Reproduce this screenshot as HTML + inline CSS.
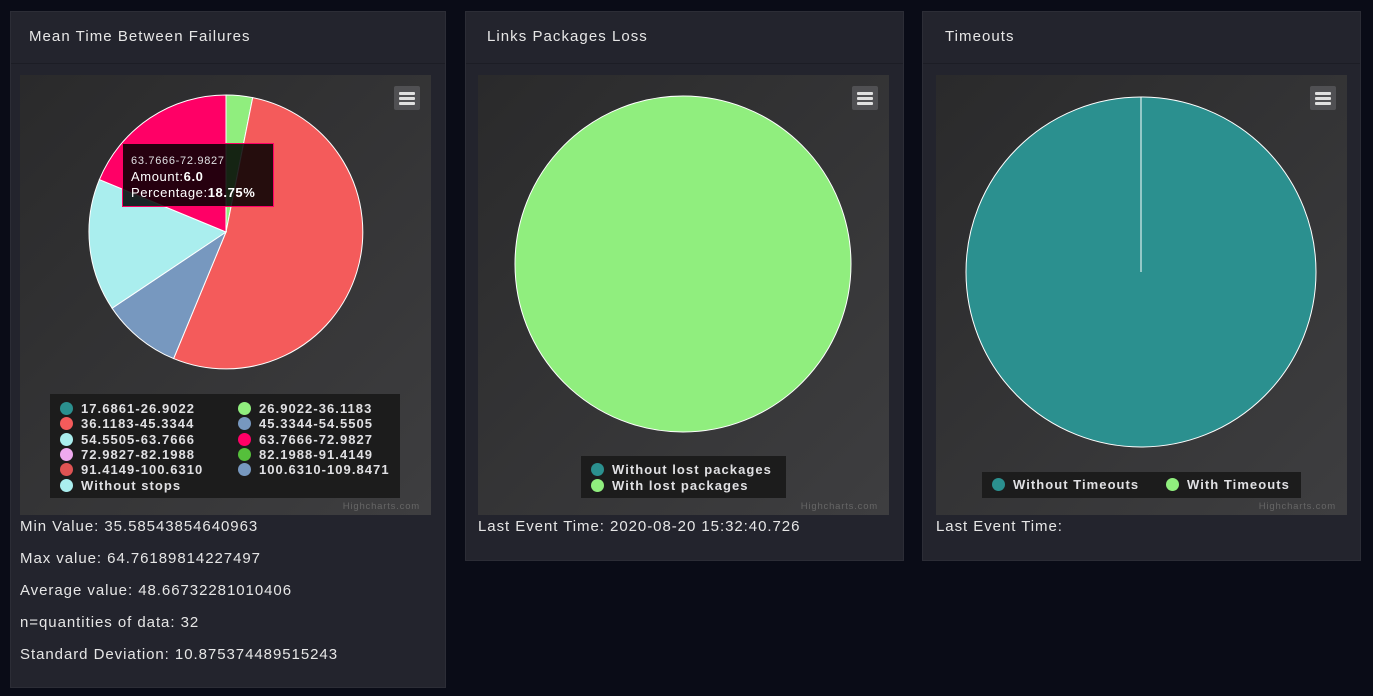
<!DOCTYPE html>
<html><head><meta charset="utf-8"><style>
*{margin:0;padding:0;box-sizing:border-box}
body{width:1373px;height:696px;background:#0a0c17;font-family:"Liberation Sans",sans-serif;position:relative;overflow:hidden;color:#e0e0e3}
.panel{position:absolute;top:11px;background:#23242d;border:1px solid #2c2d36}
.hd{height:52px;border-bottom:1px solid #1c1d25;padding:16px 0 0 18px;font-size:15px;letter-spacing:1.05px;color:#e6e6e6}
.chart{position:absolute;top:63px;left:9px;width:411px;height:440px;background:linear-gradient(135deg,#2a2a2b,#3e3e40)}
.menu{position:absolute;top:11px;right:11px;width:26px;height:24px;background:#505053;border-radius:2px}
.menu i{position:absolute;left:5px;width:16px;height:3px;background:#e0e0e0;border-radius:1px}
.hc{position:absolute;right:11px;bottom:3px;font-size:9.5px;color:#666;letter-spacing:.8px}
.leg{position:absolute;background:#1c1c1c;font-weight:bold;font-size:13px;letter-spacing:1.05px;color:#e0e0e3}
.leg div{position:absolute;white-space:nowrap;line-height:16px}
.leg span{display:inline-block;width:13px;height:13px;border-radius:50%;vertical-align:-2px;margin-right:8px}
.txt{position:absolute;font-size:15px;letter-spacing:.95px;color:#e6e6e6}
</style></head><body>

<div class="panel" style="left:10px;width:436px;height:677px">
 <div class="hd">Mean Time Between Failures</div>
 <div class="chart">
  <svg width="411" height="440" style="position:absolute;left:0;top:0">
   <g transform="translate(-19,-75)" stroke="#fff" stroke-width="1">
    <path d="M225,232 L225,95 A137,137 0 0 1 251.7,97.6Z" fill="#90ee7e"/>
    <path d="M225,232 L251.7,97.6 A137,137 0 1 1 172.6,358.6Z" fill="#f45b5b"/>
    <path d="M225,232 L172.6,358.6 A137,137 0 0 1 111.1,308.2Z" fill="#7798bf"/>
    <path d="M225,232 L111.1,308.2 A137,137 0 0 1 98.4,179.6Z" fill="#aaeeee"/>
    <path d="M225,232 L98.4,179.6 A137,137 0 0 1 225,95Z" fill="#ff0066"/>
   </g>
   <rect x="102.5" y="68.5" width="151" height="63" fill="rgba(0,0,0,0.85)" stroke="#ff0066"/>
   <text x="111" y="89" fill="#e0e0e3" font-size="11" font-family="Liberation Sans" letter-spacing=".7">63.7666-72.9827</text>
   <text x="111" y="106" fill="#fff" font-size="13" font-family="Liberation Sans" letter-spacing=".6">Amount:<tspan font-weight="bold">6.0</tspan></text>
   <text x="111" y="122" fill="#fff" font-size="13" font-family="Liberation Sans" letter-spacing=".6">Percentage:<tspan font-weight="bold">18.75%</tspan></text>
  </svg>
  <div class="menu"><i style="top:6px"></i><i style="top:11px"></i><i style="top:16px"></i></div>
  <div class="leg" style="left:30px;top:319px;width:350px;height:104px">
   <div style="left:10px;top:7px"><span style="background:#2b908f"></span>17.6861-26.9022</div>
   <div style="left:188px;top:7px"><span style="background:#90ee7e"></span>26.9022-36.1183</div>
   <div style="left:10px;top:22px"><span style="background:#f45b5b"></span>36.1183-45.3344</div>
   <div style="left:188px;top:22px"><span style="background:#7798bf"></span>45.3344-54.5505</div>
   <div style="left:10px;top:38px"><span style="background:#aaeeee"></span>54.5505-63.7666</div>
   <div style="left:188px;top:38px"><span style="background:#ff0066"></span>63.7666-72.9827</div>
   <div style="left:10px;top:53px"><span style="background:#eeaaee"></span>72.9827-82.1988</div>
   <div style="left:188px;top:53px"><span style="background:#55bf3b"></span>82.1988-91.4149</div>
   <div style="left:10px;top:68px"><span style="background:#df5353"></span>91.4149-100.6310</div>
   <div style="left:188px;top:68px"><span style="background:#7798bf"></span>100.6310-109.8471</div>
   <div style="left:10px;top:84px"><span style="background:#aaeeee"></span>Without stops</div>
  </div>
  <div class="hc">Highcharts.com</div>
 </div>
 <div class="txt" style="left:9px;top:506px">Min Value: 35.58543854640963</div>
 <div class="txt" style="left:9px;top:538px">Max value: 64.76189814227497</div>
 <div class="txt" style="left:9px;top:570px">Average value: 48.66732281010406</div>
 <div class="txt" style="left:9px;top:602px">n=quantities of data: 32</div>
 <div class="txt" style="left:9px;top:634px">Standard Deviation: 10.875374489515243</div>
</div>

<div class="panel" style="left:465px;width:439px;height:550px">
 <div class="hd" style="padding-left:21px">Links Packages Loss</div>
 <div class="chart" style="left:12px">
  <svg width="411" height="440" style="position:absolute;left:0;top:0">
   <circle cx="205" cy="189" r="168" fill="#90ee7e" stroke="#fff" stroke-width="1"/>
  </svg>
  <div class="menu"><i style="top:6px"></i><i style="top:11px"></i><i style="top:16px"></i></div>
  <div class="leg" style="left:103px;top:381px;width:205px;height:42px">
   <div style="left:10px;top:6px"><span style="background:#2b908f"></span>Without lost packages</div>
   <div style="left:10px;top:22px"><span style="background:#90ee7e"></span>With lost packages</div>
  </div>
  <div class="hc">Highcharts.com</div>
 </div>
 <div class="txt" style="left:12px;top:506px">Last Event Time: 2020-08-20 15:32:40.726</div>
</div>

<div class="panel" style="left:922px;width:439px;height:550px">
 <div class="hd" style="padding-left:22px">Timeouts</div>
 <div class="chart" style="left:13px">
  <svg width="411" height="440" style="position:absolute;left:0;top:0">
   <circle cx="205" cy="197" r="175" fill="#2b908f" stroke="#fff" stroke-width="1"/>
   <line x1="205" y1="22" x2="205" y2="197" stroke="#fff" stroke-width="1"/>
  </svg>
  <div class="menu"><i style="top:6px"></i><i style="top:11px"></i><i style="top:16px"></i></div>
  <div class="leg" style="left:46px;top:397px;width:319px;height:26px">
   <div style="left:10px;top:5px"><span style="background:#2b908f"></span>Without Timeouts</div>
   <div style="left:184px;top:5px"><span style="background:#90ee7e"></span>With Timeouts</div>
  </div>
  <div class="hc">Highcharts.com</div>
 </div>
 <div class="txt" style="left:13px;top:506px">Last Event Time:</div>
</div>
</body></html>
